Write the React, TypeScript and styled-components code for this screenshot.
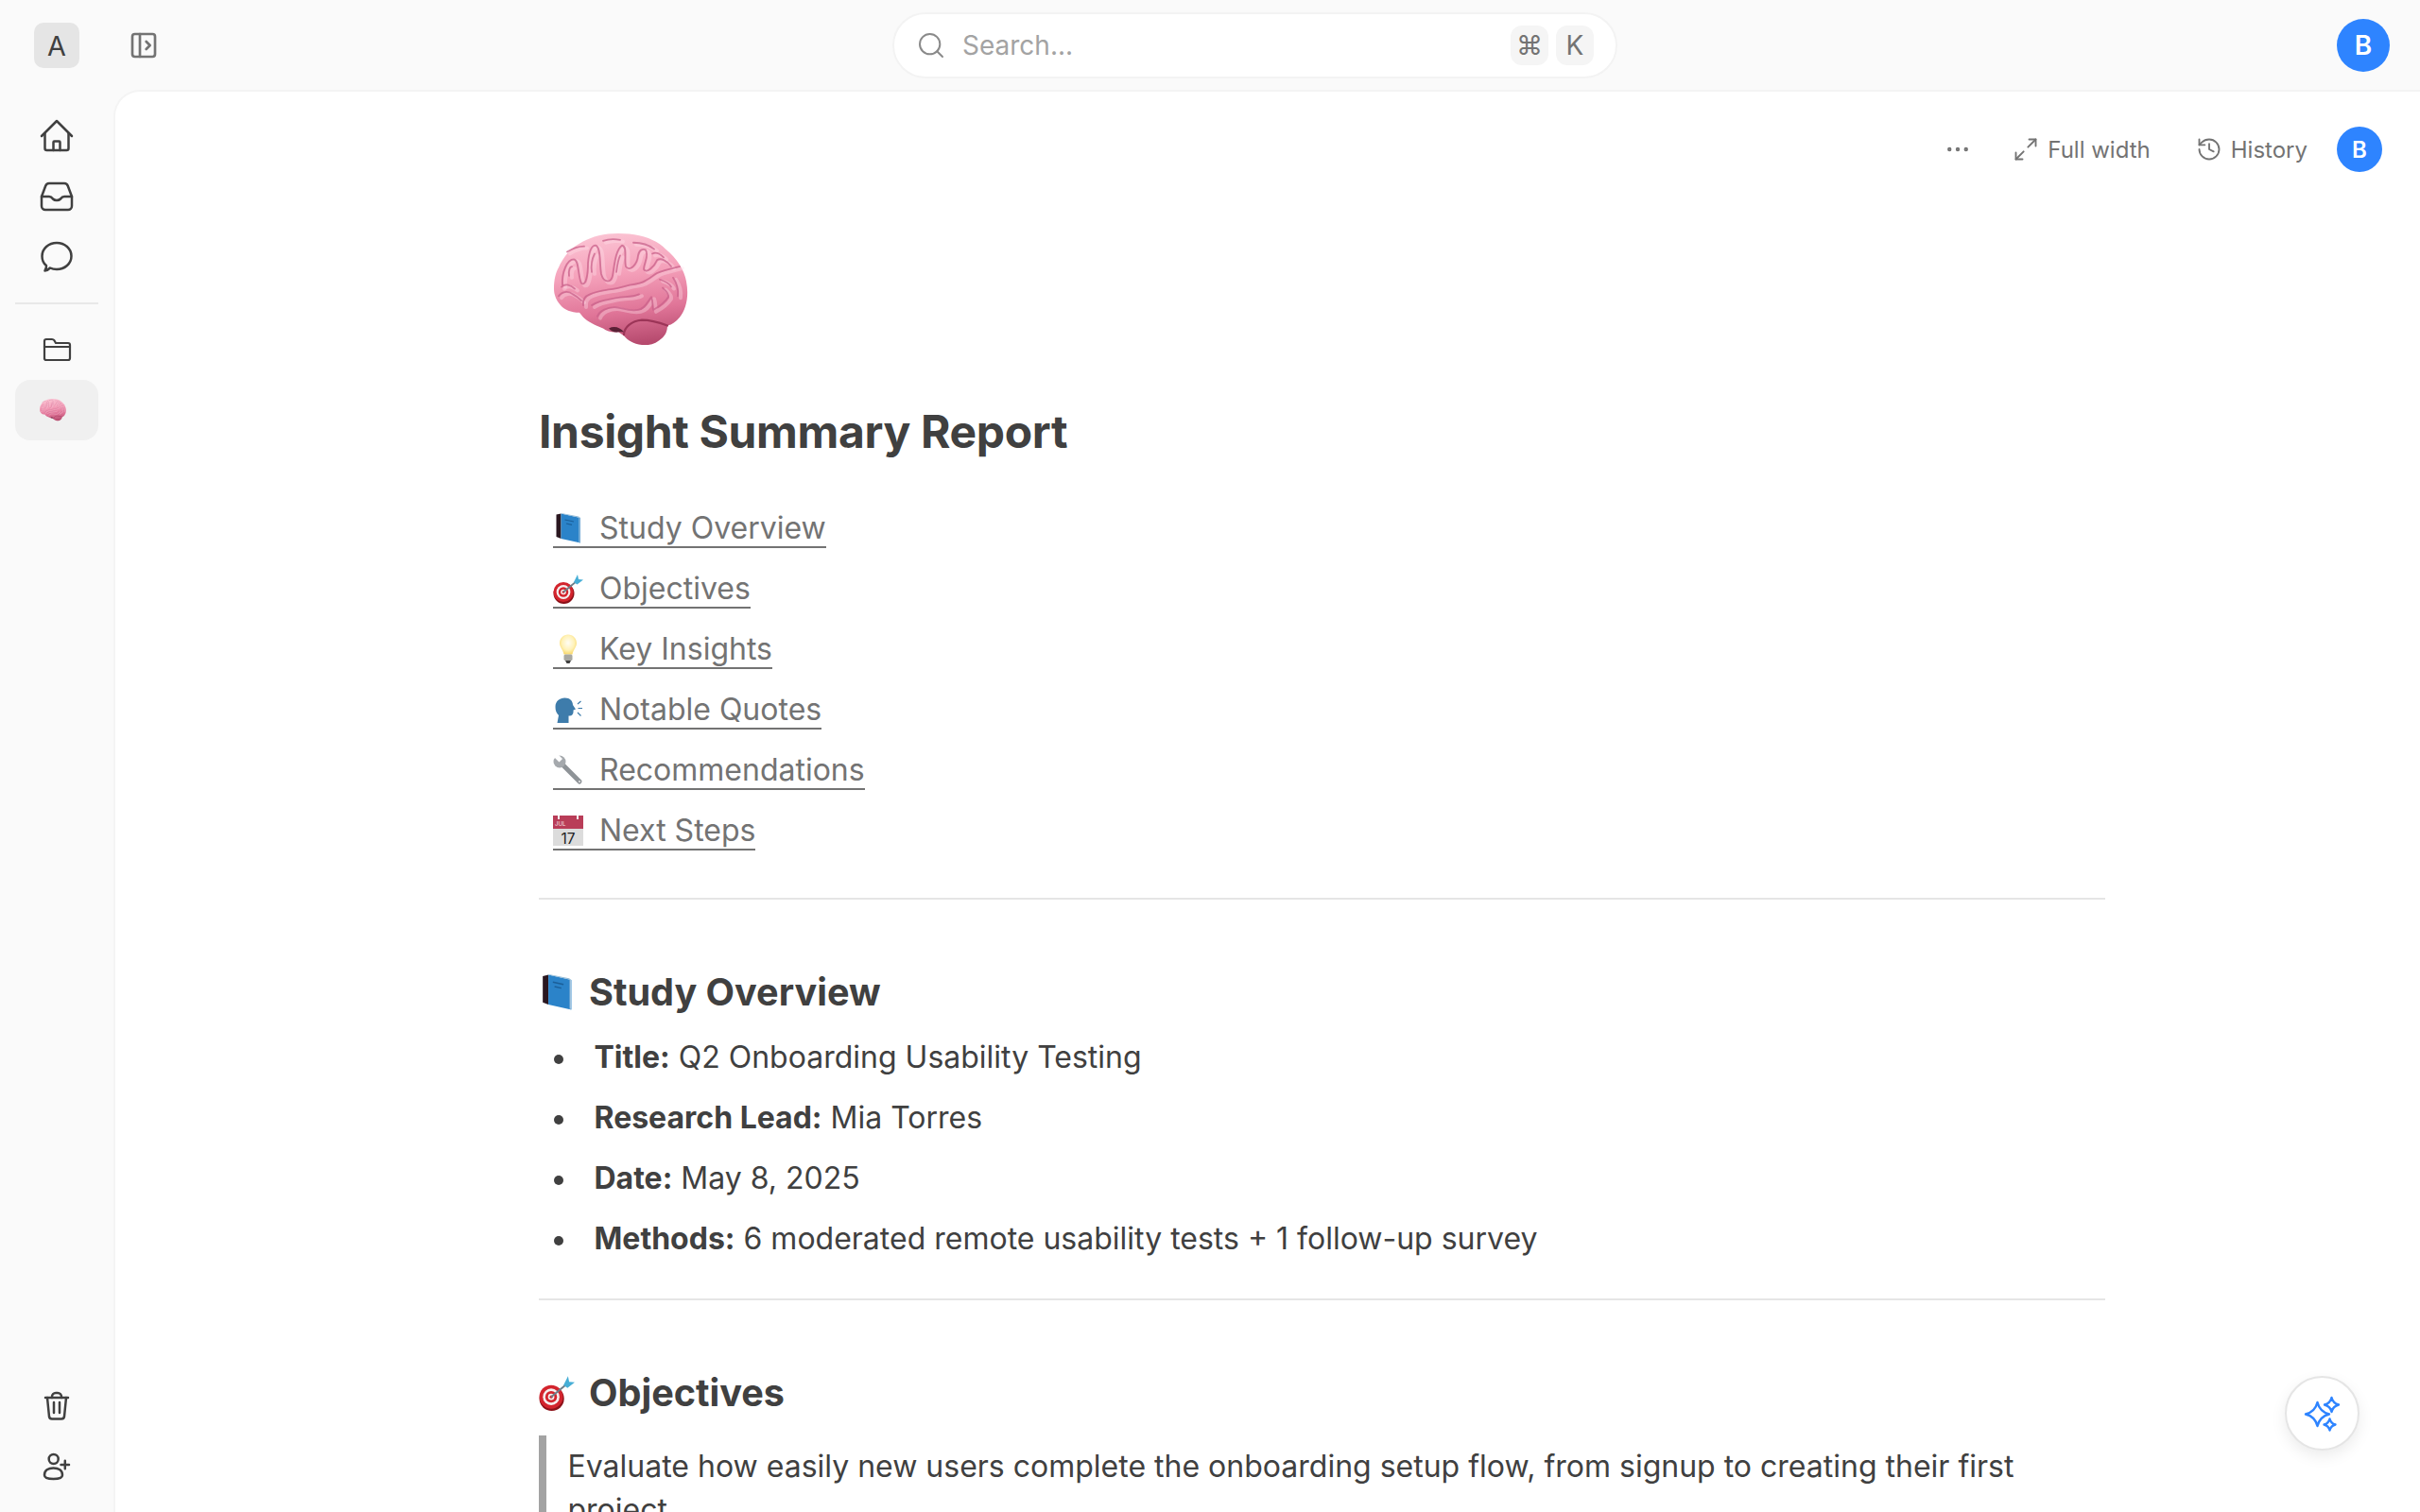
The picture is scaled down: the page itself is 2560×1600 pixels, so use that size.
import styled, { createGlobalStyle } from "styled-components";
import { Ellipsis, History, Maximize2, PanelLeftOpen, Search } from "lucide-react";

const GlobalStyle = createGlobalStyle`
  html, body {
    margin: 0;
    height: 100%;
    overflow: hidden;
    background: #fafafa;
    font-family: Inter, "Noto Sans", sans-serif;
  }
`;

const star = (cx: number, cy: number, r: number) =>
  `M${cx} ${cy - r}Q${cx + r * 0.2} ${cy - r * 0.2} ${cx + r} ${cy}Q${cx + r * 0.2} ${cy + r * 0.2} ${cx} ${cy + r}Q${cx - r * 0.2} ${cy + r * 0.2} ${cx - r} ${cy}Q${cx - r * 0.2} ${cy - r * 0.2} ${cx} ${cy - r}Z`;

const NavIcon = ({ children }: { children: React.ReactNode }) => (
  <svg width="36" height="36" viewBox="0 0 36 36" fill="none" stroke="#404040" strokeWidth="2.5" strokeLinecap="round" strokeLinejoin="round">
    {children}
  </svg>
);

const brainFolds = [
  "M9 56C8 42 14 28 21 28C27 29 25 46 29 54C34 58 36 44 36 32C37 20 40 13 44 13C50 15 48 32 50 44C53 54 60 54 62 46C64 34 65 18 72 13C78 14 74 28 76 36C80 42 88 34 89 24C90 18 94 16 97 18C101 24 95 32 95 39C98 44 106 36 109 29C113 26 120 30 124 36",
  "M14 20C20 16 26 14 32 14M52 8C58 6 64 6 70 7M84 10C92 10 100 12 106 17",
  "M16 46C15 40 17 36 19 36M40 42C39 34 41 26 43 22M66 42C67 34 68 28 70 24M104 22C108 20 112 22 116 26",
  "M5 68C8 63 15 62 20 66C24 68 27 71 29 73M8 58C12 54 18 56 22 60",
  "M31 78C30 72 33 68 38 66C45 63 52 62 58 61C66 60 73 58 80 56C88 55 93 54 97 51C103 48 105 45 109 43C116 40 125 38 133 36",
  "M46 90C48 84 56 80 64 80C72 80 78 85 89 83C96 82 99 74 103 69C105 74 104 79 105 83C112 79 118 74 121 69C122 65 118 62 115 59",
  "M40 78C48 72 58 72 66 70C74 68 82 70 90 66M126 48C130 54 132 60 131 68M112 50C118 52 122 54 124 58",
];

const Brain = ({ width }: { width: number }) => (
  <svg width={width} height={(width * 118) / 142} viewBox="0 0 142 121" preserveAspectRatio="none">
    <defs>
      <linearGradient id={`brain-${width}`} x1="0.4" y1="0" x2="0.55" y2="1">
        <stop offset="0" stopColor="#fbc3d3" />
        <stop offset="0.35" stopColor="#f5a2bb" />
        <stop offset="0.7" stopColor="#e07598" />
        <stop offset="1" stopColor="#b64a6e" />
      </linearGradient>
    </defs>
    <path
      d="M68 0C90 0 108 6 118 17C130 27 138 40 140 52C143 68 140 82 133 91C129 96 125 99 120 100C120 106 118 110 115 113C108 120 100 122 93 121C84 120 78 116 74 111L68 107C62 108 56 106 52 103C44 100 36 96 31 91L27 86C18 86 11 83 7 78C2 72 0 66 0 60C0 50 2 42 5 37C10 25 18 16 27 11C38 4 52 0 68 0Z"
      fill={`url(#brain-${width})`}
    />
    <g fill="none" strokeLinecap="round" strokeLinejoin="round">
      {brainFolds.map((d) => (
        <path key={`hi-${d}`} d={d} stroke="#ffe3ea" strokeOpacity="0.35" strokeWidth="4" transform="translate(3 2)" />
      ))}
      {brainFolds.map((d) => (
        <path key={d} d={d} stroke="#c8608a" strokeOpacity="0.75" strokeWidth="1.8" />
      ))}
      <path d="M74 110C74 102 82 95 93 94C103 94 112 97 120 100" stroke="#9c3558" strokeWidth="2.200" />
    </g>
    <path d="M58 103C64 100 70 102 74 107L68 107C64 108 61 106 58 103Z" fill="#5a2136" />
  </svg>
);

const BookEmoji = ({ size }: { size: number }) => (
  <svg width={size} height={size} viewBox="0 0 32 32">
    <path d="M3.500 1.600L8.500 0.500V27L3.500 25Z" fill="#2a1720" />
    <path d="M8.500 0.500L29 5V31.500L8.500 27Z" fill="#2b83c9" />
    <path d="M8.500 0.500L29 5L27 3.600L10 0.200Z" fill="#8fb9d6" />
    <path d="M28 5V31" stroke="#bcd2e2" strokeWidth="1" />
    <path d="M12.500 7L22 9M14 11L20 12.300" stroke="#1b5f99" strokeWidth="1.200" />
  </svg>
);

const TargetEmoji = ({ size }: { size: number }) => (
  <svg width={size} height={size} viewBox="0 0 32 32">
    <circle cx="11.500" cy="21" r="11" fill="#8c1119" />
    <circle cx="11" cy="19.500" r="10.500" fill="#d3242d" />
    <circle cx="11" cy="19.500" r="7.400" fill="#f5eeee" />
    <circle cx="11" cy="19.500" r="5.200" fill="#d3242d" />
    <circle cx="11" cy="19.500" r="2.800" fill="#f5eeee" />
    <circle cx="11" cy="19.500" r="1.300" fill="#d3242d" />
    <path d="M11 19.500L25 8" stroke="#6d7d88" strokeWidth="1.700" />
    <path d="M22 9L26 1L27 6L32 6.500L25.500 11.500Z" fill="#46aed6" />
  </svg>
);

const BulbEmoji = ({ size }: { size: number }) => (
  <svg width={size} height={size} viewBox="0 0 32 32">
    <defs>
      <radialGradient id={`bulb-${size}`} cx="0.5" cy="0.42" r="0.6">
        <stop offset="0" stopColor="#fffdf5" />
        <stop offset="0.6" stopColor="#fff2b8" />
        <stop offset="1" stopColor="#f9d766" />
      </radialGradient>
    </defs>
    <path d="M16 0.500C21 0.500 25 4.500 25 9.500C25 14 21.500 16 20.500 21.500H11.500C10.500 16 7 14 7 9.500C7 4.500 11 0.500 16 0.500Z" fill={`url(#bulb-${size})`} />
    <rect x="11.500" y="21.500" width="9" height="6.500" rx="1.500" fill="#a8a8a2" />
    <path d="M13 28H19L17.500 31H14.500Z" fill="#3f3f3f" />
  </svg>
);

const HeadEmoji = ({ size }: { size: number }) => (
  <svg width={size} height={size} viewBox="0 0 32 32">
    <path d="M2.500 13C2.500 7 7 3.500 12.500 3.500C18 3.500 21 7 21 11L24 15.500L21.500 16.500C22 21 20 23 16.500 22.500L16.500 30H4.500L6 22C3.500 19.500 2.500 17 2.500 13Z" fill="#3e7cab" />
    <path d="M26 10L29.500 7M26.500 14.500H31M26 19L29.500 22.500" stroke="#3e7cab" strokeWidth="1.200" fill="none" />
  </svg>
);

const WrenchEmoji = ({ size }: { size: number }) => (
  <svg width={size} height={size} viewBox="0 0 32 32">
    <path d="M9 9L28 28" stroke="#8e9397" strokeWidth="5" strokeLinecap="round" />
    <circle cx="7" cy="7" r="6.500" fill="#a5a9ad" />
    <path d="M6.500 7.500L1 2V0H6L10 4Z" fill="#fff" />
    <circle cx="28" cy="28" r="1.100" fill="#e4e4e4" />
  </svg>
);

const CalendarEmoji = ({ size }: { size: number }) => (
  <svg width={size} height={size} viewBox="0 0 32 32">
    <rect y="0" width="32" height="14" fill="#b93d58" />
    <rect y="14" width="32" height="18" fill="#dcdcdc" />
    <path d="M6 0V4M26 0V4" stroke="#f2f2f2" strokeWidth="2" />
    <text x="2" y="11" fontSize="6" fill="#f5e4e8" fontFamily="Inter, sans-serif">JUL</text>
    <text x="16" y="29.500" fontSize="15.500" textAnchor="middle" fill="#222" fontFamily="Inter, sans-serif">17</text>
  </svg>
);

const toc = [
  { Emoji: BookEmoji, label: "Study Overview" },
  { Emoji: TargetEmoji, label: "Objectives" },
  { Emoji: BulbEmoji, label: "Key Insights" },
  { Emoji: HeadEmoji, label: "Notable Quotes" },
  { Emoji: WrenchEmoji, label: "Recommendations" },
  { Emoji: CalendarEmoji, label: "Next Steps" },
];

const overview = [
  { key: "Title:", value: "Q2 Onboarding Usability Testing" },
  { key: "Research Lead:", value: "Mia Torres" },
  { key: "Date:", value: "May 8, 2025" },
  { key: "Methods:", value: "6 moderated remote usability tests + 1 follow-up survey" },
];

const App = () => {
  return (
    <Page>
      <GlobalStyle />
      <TopBar>
        <TopLeft>
          <WorkspaceButton>A</WorkspaceButton>
          <PanelButton>
            <PanelLeftOpen size={32} strokeWidth={2} />
          </PanelButton>
        </TopLeft>
        <SearchBox>
          <Search size={32} strokeWidth={1.5} color="#8a8a8a" />
          <SearchText>Search...</SearchText>
          <Keys>
            <Key>⌘</Key>
            <Key>K</Key>
          </Keys>
        </SearchBox>
        <UserAvatar $size={56}>B</UserAvatar>
      </TopBar>
      <Body>
        <Sidebar>
          <NavGroup>
            <NavItem>
              <NavIcon>
                <path d="M2 18L18 2L34 18" />
                <path d="M5.500 15V31a2 2 0 0 0 2 2H28.500a2 2 0 0 0 2-2V15" />
                <path d="M14.500 33V24.500a1 1 0 0 1 1-1H20.500a1 1 0 0 1 1 1V33" />
              </NavIcon>
            </NavItem>
            <NavItem>
              <NavIcon>
                <path d="M10 4H26a4 4 0 0 1 3.800 2.800L34 18V28a4 4 0 0 1-4 4H6a4 4 0 0 1-4-4V18L6.200 6.800A4 4 0 0 1 10 4Z" />
                <path d="M2 18H10c2 0 3 1 4 2.500c1 1 2 1.500 4 1.500s3-.5 4-1.500c1-1.500 2-2.500 4-2.500H34" />
              </NavIcon>
            </NavItem>
            <NavItem>
              <NavIcon>
                <path d="M7 27C3.500 24.500 2.500 21 2.500 17C2.500 9 9.500 3 18 3S33.500 9 33.500 17S26.500 31 18 31C15.500 31 13 30.500 11 29.500C9.500 31 7.500 32.500 5.500 32.500C6.500 31 7.200 29 7 27Z" />
              </NavIcon>
            </NavItem>
            <NavDivider />
            <NavItem>
              <NavIcon>
                <path d="M5 28V9a2 2 0 0 1 2-2H13c1 0 1.800.4 2.400 1.200L17 11H30a2 2 0 0 1 2 2V27a2 2 0 0 1-2 2H7a2 2 0 0 1-2-2Z" strokeWidth="2.200" />
                <path d="M5 15H32" strokeWidth="2.200" />
              </NavIcon>
            </NavItem>
            <NavItem $active>
              <SidebarEmoji>
                <Brain width={28} />
              </SidebarEmoji>
            </NavItem>
          </NavGroup>
          <NavGroup>
            <NavItem>
              <NavIcon>
                <path d="M6 9H30" />
                <path d="M13 9V8a4 4 0 0 1 4-4h2a4 4 0 0 1 4 4v1" />
                <path d="M8 9L10 29a3 3 0 0 0 3 2.500H23a3 3 0 0 0 3-2.500L28 9" />
                <path d="M15 14V25M21 14V25" />
              </NavIcon>
            </NavItem>
            <NavItem>
              <NavIcon>
                <circle cx="14.700" cy="10" r="5" />
                <path d="M5 27C5 22 9 19.500 14.500 19.500S24 22 24 27C24 30 20 31 14.500 31S5 30 5 27Z" />
                <path d="M22.500 16H31M26.800 11.700V20.300" />
              </NavIcon>
            </NavItem>
          </NavGroup>
        </Sidebar>
        <Main>
          <Toolbar>
            <ToolButton $iconOnly>
              <Ellipsis size={30} strokeWidth={1.5} />
            </ToolButton>
            <ToolButton>
              <Maximize2 size={28} strokeWidth={1.6} />
              Full width
            </ToolButton>
            <ToolButton>
              <History size={28} strokeWidth={1.6} />
              History
            </ToolButton>
            <ToolbarAvatar $size={48}>B</ToolbarAvatar>
          </Toolbar>
          <Doc>
            <HeroEmoji>
              <Brain width={142} />
            </HeroEmoji>
            <Title>Insight Summary Report</Title>
            <Toc>
              {toc.map(({ Emoji, label }) => (
                <TocRow key={label}>
                  <TocLink>
                    <Emoji size={32} />
                    <TocLabel>{label}</TocLabel>
                  </TocLink>
                </TocRow>
              ))}
            </Toc>
            <Rule />
            <SectionTitle>
              <BookEmoji size={38} />
              Study Overview
            </SectionTitle>
            <Bullets>
              {overview.map((row) => (
                <Bullet key={row.key}>
                  <strong>{row.key}</strong> {row.value}
                </Bullet>
              ))}
            </Bullets>
            <Rule $tight />
            <SectionTitle>
              <TargetEmoji size={38} />
              Objectives
            </SectionTitle>
            <Quote>
              Evaluate how easily new users complete the onboarding setup flow, from signup to creating their first project.
            </Quote>
          </Doc>
          <AssistantButton>
            <svg width="44" height="44" viewBox="0 0 44 44" fill="none" stroke="#2e84ff" strokeWidth="2.400" strokeLinejoin="round">
              <path d={star(16.5, 22.5, 12.5)} />
              <path d={star(31.5, 12.5, 7.5)} />
              <path d={star(29.5, 33.5, 6)} />
            </svg>
          </AssistantButton>
        </Main>
      </Body>
    </Page>
  );
};

export default App;

const Page = styled.div`
  height: 1600px;
  display: flex;
  flex-direction: column;
  overflow: hidden;
  background: #fafafa;
`;

const TopBar = styled.header`
  height: 96px;
  flex: none;
  display: flex;
  align-items: center;
  padding: 0 32px 0 36px;
`;

const TopLeft = styled.div`
  width: 908px;
  display: flex;
  align-items: center;
  gap: 52px;
`;

const WorkspaceButton = styled.div`
  width: 48px;
  height: 48px;
  border-radius: 10px;
  background: #e5e5e5;
  color: #404040;
  font-size: 28.8px;
  display: flex;
  align-items: center;
  justify-content: center;
`;

const PanelButton = styled.div`
  display: flex;
  color: #737373;
`;

const SearchBox = styled.div`
  width: 767px;
  height: 70px;
  box-sizing: border-box;
  display: flex;
  align-items: center;
  padding: 0 23px;
  background: #fff;
  border: 2px solid #f3f3f3;
  border-radius: 35px;
`;

const SearchText = styled.span`
  margin-left: 17px;
  font-size: 28px;
  color: #a3a3a3;
`;

const Keys = styled.div`
  margin-left: auto;
  display: flex;
  gap: 8px;
`;

const Key = styled.kbd`
  width: 40px;
  height: 42px;
  border-radius: 12px;
  background: #f5f5f5;
  color: #737373;
  font-family: Inter, "DejaVu Sans", sans-serif;
  font-size: 28px;
  display: flex;
  align-items: center;
  justify-content: center;
`;

const UserAvatar = styled.div<{ $size: number }>`
  width: ${(p) => p.$size}px;
  height: ${(p) => p.$size}px;
  margin-left: auto;
  border-radius: 50%;
  background: #2e84ff;
  color: #fff;
  font-size: ${(p) => p.$size / 2}px;
  font-weight: 600;
  display: flex;
  align-items: center;
  justify-content: center;
`;

const Body = styled.div`
  flex: 1;
  min-height: 0;
  display: flex;
`;

const Sidebar = styled.aside`
  width: 120px;
  flex: none;
  box-sizing: border-box;
  padding: 16px 16px;
  display: flex;
  flex-direction: column;
  justify-content: space-between;
`;

const NavGroup = styled.nav`
  display: flex;
  flex-direction: column;
`;

const NavItem = styled.div<{ $active?: boolean }>`
  height: 64px;
  display: flex;
  align-items: center;
  justify-content: center;
  border-radius: 16px;
  background: ${(p) => (p.$active ? "#f0f0f0" : "transparent")};
`;

const SidebarEmoji = styled.span`
  display: flex;
  margin-right: 8px;
`;

const NavDivider = styled.div`
  height: 2px;
  margin: 16px 0;
  background: #e8e8e8;
`;

const Main = styled.main`
  flex: 1;
  min-width: 0;
  position: relative;
  background: #fff;
  border-top: 2px solid #f4f4f4;
  border-left: 2px solid #f4f4f4;
  border-top-left-radius: 28px;
  margin-top: -1px;
`;

const Toolbar = styled.div`
  height: 122px;
  padding-right: 40px;
  display: flex;
  align-items: center;
  justify-content: flex-end;
`;

const ToolButton = styled.div<{ $iconOnly?: boolean }>`
  display: flex;
  align-items: center;
  gap: 9px;
  padding: 0 ${(p) => (p.$iconOnly ? "19px" : "24px")};
  color: #737373;
  font-size: 24px;
`;

const ToolbarAvatar = styled(UserAvatar)`
  margin-left: 7px;
`;

const Doc = styled.article`
  width: 1657px;
  margin-left: 448px;
  color: #404040;
`;

const HeroEmoji = styled.div`
  margin: 28px 0 0 16px;
  display: flex;
`;

const Title = styled.h1`
  margin: 60px 0 0;
  font-size: 48px;
  line-height: 64px;
  font-weight: 700;
  letter-spacing: -0.0075em;
  color: #404040;
`;

const Toc = styled.div`
  margin-top: 39px;
  padding-left: 15px;
`;

const TocRow = styled.div`
  height: 64px;
  display: flex;
  align-items: center;
`;

const TocLink = styled.a`
  height: 38px;
  display: inline-flex;
  align-items: center;
  border-bottom: 2px solid #737373;
  color: #737373;
  font-size: 32px;
  line-height: 38px;
`;

const TocLabel = styled.span`
  margin-left: 17px;
`;

const Rule = styled.hr<{ $tight?: boolean }>`
  height: 2px;
  margin: ${(p) => (p.$tight ? "31px" : "38px")} 0 0;
  border: 0;
  background: #e5e5e5;
`;

const SectionTitle = styled.h2`
  margin: 72px 0 0;
  display: flex;
  align-items: center;
  gap: 15px;
  font-size: 39.6px;
  line-height: 52px;
  font-weight: 700;
  color: #404040;
`;

const Bullets = styled.ul`
  margin: 11px 0 0;
  padding: 0;
  list-style: none;
`;

const Bullet = styled.li`
  position: relative;
  height: 64px;
  padding-left: 58.5px;
  font-size: 32px;
  line-height: 64px;

  &::before {
    content: "";
    position: absolute;
    left: 16px;
    top: 29px;
    width: 10px;
    height: 10px;
    border-radius: 50%;
    background: #404040;
  }

  strong {
    font-weight: 700;
  }
`;

const Quote = styled.blockquote`
  margin: 19px 0 0;
  padding: 10px 0 8px 22.5px;
  border-left: 8px solid #a3a3a3;
  font-size: 32px;
  line-height: 46px;
`;

const AssistantButton = styled.div`
  position: absolute;
  right: 64px;
  bottom: 65px;
  width: 79px;
  height: 79px;
  box-sizing: border-box;
  border-radius: 50%;
  background: #fff;
  border: 2px solid #e5e5e5;
  box-shadow: 0 6px 16px rgba(0, 0, 0, 0.08);
  display: flex;
  align-items: center;
  justify-content: center;
`;
